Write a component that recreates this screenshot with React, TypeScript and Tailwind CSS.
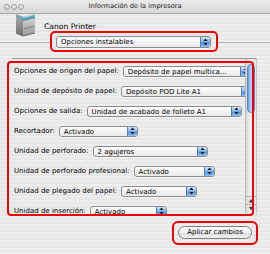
import React from "react";

function Stepper() {
  return (
    <div className="w-[10px] h-full shrink-0 rounded-r-[3px] border-l border-[#5a7fb0] bg-[linear-gradient(180deg,#cfe3fb_0%,#8ab8ee_45%,#4f92e0_55%,#8cc3f5_100%)] flex items-center justify-center">
      <svg width="5" height="8" viewBox="0 0 5 8">
        <path d="M2.5 0.5 L4.5 3 L0.5 3 Z" fill="#111" />
        <path d="M0.5 5 L4.5 5 L2.5 7.5 Z" fill="#111" />
      </svg>
    </div>
  );
}

function Popup({ value, w, tall }: { value: string; w: string; tall?: boolean }) {
  return (
    <div
      className={`${w} ${tall ? "h-[12px]" : "h-[11px]"} shrink-0 flex items-stretch rounded-[3px] border border-[#8c8c8c] bg-[linear-gradient(180deg,#ffffff_0%,#f4f4f4_50%,#e8e8e8_100%)] shadow-[0_1px_0_rgba(255,255,255,0.6)] overflow-hidden`}
    >
      <div className="flex-1 pl-[4px] text-[7px] leading-[10px] text-black whitespace-nowrap overflow-hidden">
        {value}
      </div>
      <Stepper />
    </div>
  );
}

const rows = [
  { label: "Opciones de origen del papel:", value: "Depósito de papel multica...", w: "w-[128px]" },
  { label: "Unidad de depósito de papel:", value: "Depósito POD Lite A1", w: "w-[131px]" },
  { label: "Opciones de salida:", value: "Unidad de acabado de folleto A1", w: "w-[155px]" },
  { label: "Recortador:", value: "Activado", w: "w-[79px]" },
  { label: "Unidad de perforado:", value: "2 agujeros", w: "w-[115px]" },
  { label: "Unidad de perforado profesional:", value: "Activado", w: "w-[81px]" },
  { label: "Unidad de plegado del papel:", value: "Activado", w: "w-[76px]" },
  { label: "Unidad de inserción:", value: "Activado", w: "w-[77px]" },
];

function PrinterIcon() {
  return (
    <svg width="23" height="27" viewBox="0 0 23 27">
      <defs>
        <linearGradient id="front" x1="0" y1="0" x2="0" y2="1">
          <stop offset="0" stopColor="#dcdcdc" />
          <stop offset="1" stopColor="#9a9a9a" />
        </linearGradient>
        <linearGradient id="side" x1="0" y1="0" x2="0" y2="1">
          <stop offset="0" stopColor="#b0b0b0" />
          <stop offset="1" stopColor="#6e6e6e" />
        </linearGradient>
      </defs>
      <path d="M3 4 L15 1 L22 4 L10 7 Z" fill="#eeeeee" stroke="#8a8a8a" strokeWidth="0.5" />
      <path d="M3 4 L10 7 L10 26 L3 23 Z" fill="url(#side)" />
      <path d="M10 7 L22 4 L22 23 L10 26 Z" fill="url(#front)" />
      <path d="M3.5 5 L10 8 L22 5 L22 7 L10 10 L3.5 7 Z" fill="#4fa9c9" />
      <path d="M10 10 L22 7 L22 8 L10 11 Z" fill="#2f7fa0" />
      <path d="M11 18 L21 15.5 L21 17 L11 19.5 Z" fill="#8f8f8f" />
      <path d="M3 23 L10 26 L22 23" fill="none" stroke="#555" strokeWidth="0.8" />
    </svg>
  );
}

export default function App() {
  return (
    <div className="relative w-[270px] h-[254px] overflow-hidden bg-[repeating-linear-gradient(180deg,#eeeeee_0px,#eeeeee_2px,#e7e7e7_2px,#e7e7e7_4px)] font-[family-name:DejaVu_Sans,Verdana,sans-serif] text-black flex flex-col">
      {/* Title bar */}
      <div className="relative h-[14px] shrink-0 border-b border-[#a8a8a8] bg-[linear-gradient(180deg,#ececec_0%,#d6d6d6_100%)] flex items-center">
        <div className="flex gap-[1px] pl-[4px]">
          {[0, 1, 2].map((i) => (
            <div
              key={i}
              className="w-[6px] h-[6px] rounded-full border border-[#9a9a9a] bg-[linear-gradient(180deg,#f4f4f4_0%,#cfcfcf_100%)]"
            />
          ))}
        </div>
        <div className="absolute inset-0 flex items-center justify-center text-[6.6px] leading-none text-[#222]">
          Información de la impresora
        </div>
      </div>

      {/* Header */}
      <div className="h-[18px] shrink-0 flex items-end pl-[13px]">
        <div className="-mb-[5px]">
          <PrinterIcon />
        </div>
        <div className="ml-[8px] mb-[1px] text-[7.6px] leading-none">Canon Printer</div>
      </div>

      {/* Popup row */}
      <div className="mt-[4px] h-[11px] shrink-0 flex items-center">
        <div className="w-[50px] h-px bg-[#b5b5b5] mt-[1px]" />
        <div className="ml-[6px]">
          <Popup value="Opciones instalables" w="w-[155px]" tall />
        </div>
        <div className="ml-[6px] flex-1 h-px bg-[#b5b5b5] mt-[2px]" />
      </div>

      {/* List */}
      <div className="mt-[11px] ml-[12px] w-[245px] h-[157px] shrink-0 flex border-t border-[#9a9a9a] border-r border-r-[#c9c9c9]">
        <div className="flex-1 overflow-hidden flex flex-col pt-[2px] pl-[2px]">
          {rows.map((r) => (
            <div key={r.label} className="h-[20px] shrink-0 flex items-center gap-[4px] whitespace-nowrap">
              <span className="text-[7px] leading-none shrink-0">{r.label}</span>
              <Popup value={r.value} w={r.w} />
            </div>
          ))}
        </div>
        {/* Scrollbar */}
        <div className="w-[11px] shrink-0 flex flex-col border-l border-[#b8b8b8] bg-[linear-gradient(90deg,#d8d8d8_0%,#f4f4f4_50%,#e2e2e2_100%)]">
          <div className="flex-1 pt-[5px] px-[1px]">
            <div className="h-[49px] rounded-full border border-[#5d86bd] bg-[linear-gradient(90deg,#5f9de6_0%,#b9d9fb_50%,#5b97df_100%)]" />
          </div>
          <div className="h-[8px] border-t border-[#b0b0b0] flex items-center justify-center text-[5px] leading-none text-[#333]">▲</div>
          <div className="h-[8px] border-t border-[#b0b0b0] flex items-center justify-center text-[5px] leading-none text-[#333] mb-[3px]">▼</div>
        </div>
      </div>

      {/* Button */}
      <div className="mt-[11px] flex justify-end pr-[18px]">
        <div className="w-[74px] h-[13px] rounded-full border border-[#7f7f7f] bg-[linear-gradient(180deg,#ffffff_0%,#f2f2f2_50%,#dcdcdc_51%,#f0f0f0_100%)] flex items-center justify-center text-[7px] leading-none">
          Aplicar cambios
        </div>
      </div>

      {/* Red annotation overlays */}
      <div className="absolute left-[50px] top-[31px] w-[168px] h-[21px] rounded-[5px] border-2 border-[#f20000] pointer-events-none" />
      <div className="absolute left-[7px] top-[61px] w-[247px] h-[155px] rounded-[4px] border-2 border-[#f20000] pointer-events-none" />
      <div className="absolute left-[172px] top-[221px] w-[86px] h-[24px] rounded-[6px] border-2 border-[#f20000] pointer-events-none" />
    </div>
  );
}
